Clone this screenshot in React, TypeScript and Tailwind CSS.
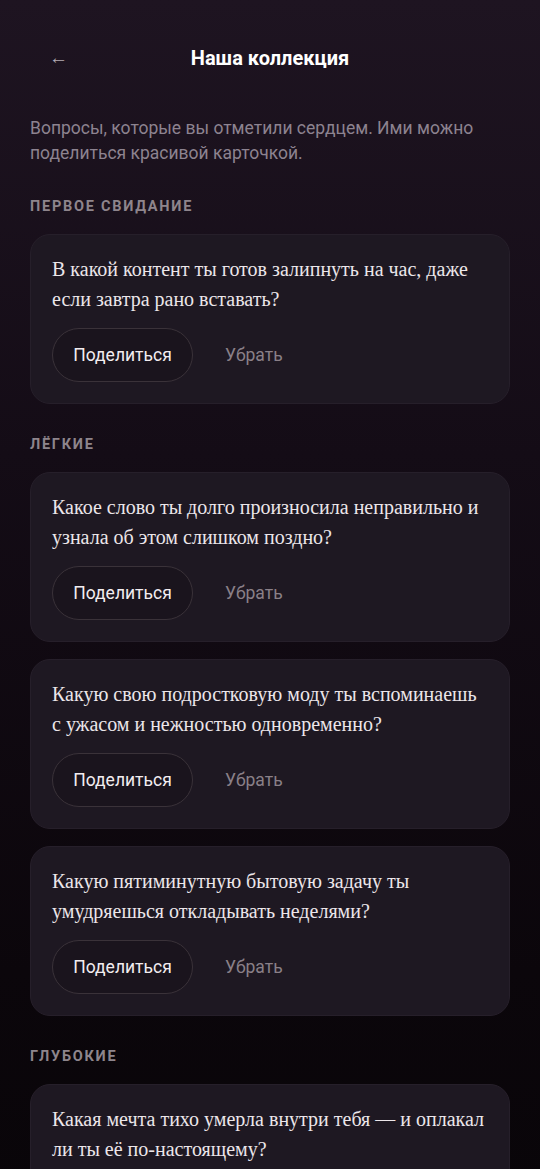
type Section = {
  title: string;
  questions: string[];
};

const sections: Section[] = [
  {
    title: "Первое свидание",
    questions: ["В какой контент ты готов залипнуть на час, даже если завтра рано вставать?"],
  },
  {
    title: "Лёгкие",
    questions: [
      "Какое слово ты долго произносила неправильно и узнала об этом слишком поздно?",
      "Какую свою подростковую моду ты вспоминаешь с ужасом и нежностью одновременно?",
      "Какую пятиминутную бытовую задачу ты умудряешься откладывать неделями?",
    ],
  },
  {
    title: "Глубокие",
    questions: ["Какая мечта тихо умерла внутри тебя — и оплакал ли ты её по-настоящему?"],
  },
];

function QuestionCard({ text }: { text: string }) {
  return (
    <div className="rounded-[20px] border border-[#261f2a] bg-[#1e1822] px-[21px] pt-[19px] pb-[21px]">
      <p className="font-['Liberation_Serif',serif] text-[20px] leading-[30px] text-[#ece6ea]">{text}</p>
      <div className="mt-[14px] flex items-center gap-8">
        <button className="h-[54px] w-[141px] rounded-full border border-[#3a3239] bg-[#1a141d] text-[17.5px] text-[#f2edf0]">
          Поделиться
        </button>
        <button className="text-[17.5px] text-[#8a8088]">Убрать</button>
      </div>
    </div>
  );
}

export default function App() {
  return (
    <div className="min-h-[1169px] bg-[linear-gradient(180deg,#1e1421_0%,#140c16_35%,#0b060b_75%,#080508_100%)] font-['Roboto',sans-serif]">
      <header className="relative flex h-[116px] items-center justify-center">
        <span className="absolute left-[49px] top-[44px] text-[19px] leading-[28px] text-[#b5acb3]">←</span>
        <h1 className="text-[20px] font-bold text-white">Наша коллекция</h1>
      </header>

      <p className="px-[30px] text-[17.5px] leading-[25px] text-[#8d8390]">
        Вопросы, которые вы отметили сердцем. Ими можно поделиться красивой карточкой.
      </p>

      <div className="mt-[31px] flex flex-col gap-[31px] px-[30px] pb-10">
        {sections.map((s) => (
          <section key={s.title}>
            <h2 className="text-[14.5px] font-bold uppercase leading-[20px] tracking-[0.12em] text-[#8e858c]">
              {s.title}
            </h2>
            <div className="mt-[17px] flex flex-col gap-[17px]">
              {s.questions.map((q) => (
                <QuestionCard key={q} text={q} />
              ))}
            </div>
          </section>
        ))}
      </div>
    </div>
  );
}
